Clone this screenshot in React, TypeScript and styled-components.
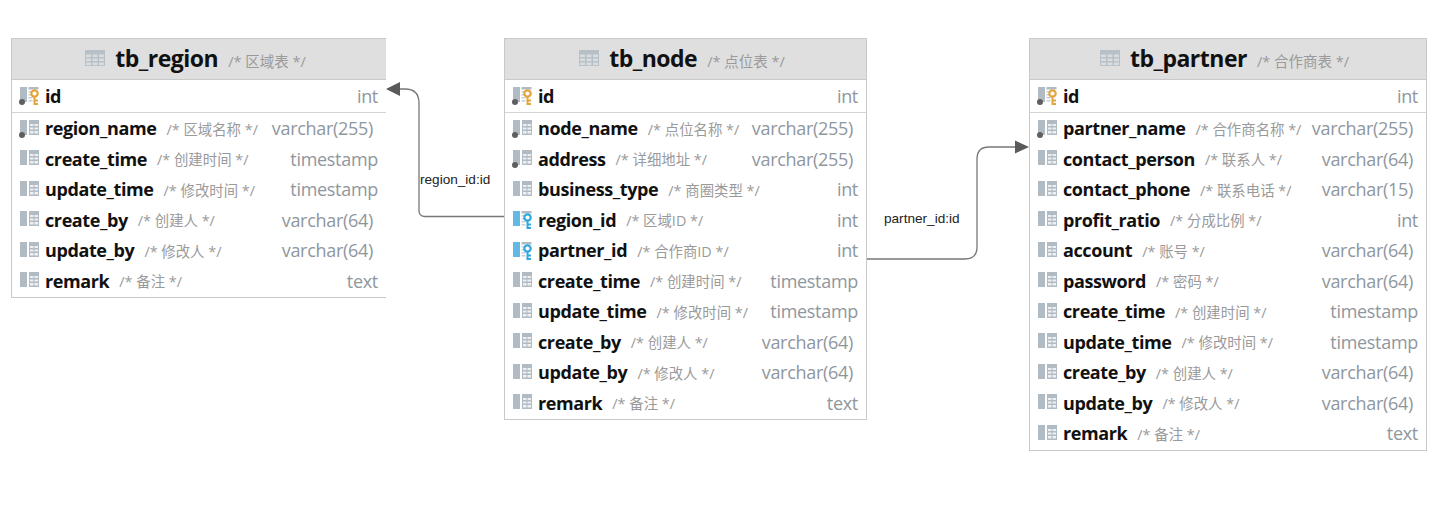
import React from 'react';
import styled, { createGlobalStyle } from 'styled-components';

const GlobalStyle = createGlobalStyle`
  html, body {
    margin: 0;
    padding: 0;
    background: #fff;
  }
`;

const FONT = `"Open Sans", "Noto Sans CJK SC", sans-serif`;

const Canvas = styled.div`
  position: relative;
  width: 1447px;
  height: 512px;
  overflow: hidden;
  background: #fff;
  font-family: ${FONT};
`;

const TableNode = styled.div<{ $x: number; $width: number; $open?: boolean }>`
  position: absolute;
  left: ${(p) => p.$x}px;
  top: 38px;
  width: ${(p) => p.$width}px;
  box-sizing: border-box;
  border: 1px solid #c9c9c9;
  border-right: ${(p) => (p.$open ? 'none' : '1px solid #c9c9c9')};
  padding-bottom: 1.5px;
  background: #fff;
`;

const Header = styled.div`
  height: 41px;
  box-sizing: border-box;
  display: flex;
  align-items: center;
  justify-content: center;
  gap: 10px;
  padding: 0 7px 2px 0;
  background: #dfdfdf;
  border-bottom: 1px solid #c9c9c9;
`;

const TableName = styled.span`
  font-size: 23px;
  font-weight: 700;
  letter-spacing: -0.5px;
  color: #111;
`;

const TableComment = styled.span`
  font-size: 14.5px;
  color: #9a9a9a;
  margin-top: 4px;
`;

const KeyRow = styled.div`
  height: 32.75px;
  box-sizing: border-box;
  display: flex;
  align-items: center;
  padding: 0 8px 0 7px;
  border-bottom: 1px solid #d4d4d4;
`;

const Row = styled.div`
  height: 30.5px;
  display: flex;
  align-items: center;
  padding: 0 8px 0 7px;
`;

const ColumnName = styled.span`
  font-size: 18px;
  font-weight: 700;
  letter-spacing: -0.4px;
  color: #111;
  margin-left: 5px;
`;

const ColumnComment = styled.span`
  font-size: 14.4px;
  color: #9a9a9a;
  margin-left: 10px;
`;

const ColumnType = styled.span<{ $sized: boolean }>`
  margin-left: auto;
  margin-right: ${(p) => (p.$sized ? 5 : 0)}px;
  font-size: 18px;
  letter-spacing: -0.3px;
  color: #8f979e;
`;

const Wires = styled.svg`
  position: absolute;
  left: 0;
  top: 0;
  pointer-events: none;
`;

const WireLabel = styled.span<{ $x: number; $y: number }>`
  position: absolute;
  left: ${(p) => p.$x}px;
  top: ${(p) => p.$y}px;
  font-family: "Liberation Sans", sans-serif;
  font-size: 13.6px;
  line-height: 14px;
  color: #222;
`;

type Kind = 'pk' | 'nn' | 'fk' | 'plain';

const TableIcon = () => (
  <svg width="20" height="16" viewBox="0 0 20 16">
    <rect width="20" height="16" fill="#b7c0c7" />
    <g fill="#d9dde0">
      {[4.5, 8.5, 12.5].map((y) =>
        [1, 7.5, 14].map((x) => <rect key={`${x}-${y}`} x={x} y={y} width="5" height="2.6" />),
      )}
    </g>
  </svg>
);

const ColumnIcon = ({ kind }: { kind: Kind }) => {
  const barColor = kind === 'fk' ? '#62b9e6' : '#b1bbc3';
  const keyColor = kind === 'pk' ? '#e4a53c' : '#2fa8dd';
  const hasKey = kind === 'pk' || kind === 'fk';
  return (
    <svg width="21" height="21" viewBox="0 0 21 21">
      <rect x="1" y="2" width="7" height="15" fill={barColor} />
      {hasKey ? (
        <g>
          <rect x="9.500" y="2" width="10" height="2.500" fill="#b1bbc3" />
          <g fill="#c8cfd5">
            <rect x="9.500" y="6" width="3" height="1.500" />
            <rect x="9.500" y="9" width="3" height="1.500" />
            <rect x="9.500" y="12" width="4" height="1.500" />
            <rect x="9.500" y="15" width="4" height="1.500" />
          </g>
          <circle cx="15.500" cy="8.500" r="3.200" fill="none" stroke={keyColor} strokeWidth="2.200" />
          <path d="M15.500 11v9M15.500 15.500h3.500M15.500 19h3.500" fill="none" stroke={keyColor} strokeWidth="2" />
        </g>
      ) : (
        <g>
          <rect x="10" y="2" width="10" height="15" fill="#b1bbc3" />
          <g fill="#eef0f2">
            <rect x="11" y="6" width="3.500" height="2" />
            <rect x="15.500" y="6" width="3.500" height="2" />
            <rect x="11" y="9.500" width="3.500" height="2" />
            <rect x="15.500" y="9.500" width="3.500" height="2" />
            <rect x="11" y="13" width="3.500" height="2.500" />
            <rect x="15.500" y="13" width="3.500" height="2.500" />
          </g>
        </g>
      )}
      {(kind === 'pk' || kind === 'nn') && <circle cx="3" cy="17" r="3" fill="#5f5f5f" />}
    </svg>
  );
};

type Column = { name: string; comment?: string; type: string; kind: Kind };

type TableData = {
  name: string;
  comment: string;
  x: number;
  width: number;
  open?: boolean;
  columns: Column[];
};

const tables: TableData[] = [
  {
    name: 'tb_region',
    comment: '/* 区域表 */',
    x: 11,
    width: 375,
    open: true,
    columns: [
      { name: 'region_name', comment: '/* 区域名称 */', type: 'varchar(255)', kind: 'nn' },
      { name: 'create_time', comment: '/* 创建时间 */', type: 'timestamp', kind: 'plain' },
      { name: 'update_time', comment: '/* 修改时间 */', type: 'timestamp', kind: 'plain' },
      { name: 'create_by', comment: '/* 创建人 */', type: 'varchar(64)', kind: 'plain' },
      { name: 'update_by', comment: '/* 修改人 */', type: 'varchar(64)', kind: 'plain' },
      { name: 'remark', comment: '/* 备注 */', type: 'text', kind: 'plain' },
    ],
  },
  {
    name: 'tb_node',
    comment: '/* 点位表 */',
    x: 504,
    width: 363,
    columns: [
      { name: 'node_name', comment: '/* 点位名称 */', type: 'varchar(255)', kind: 'nn' },
      { name: 'address', comment: '/* 详细地址 */', type: 'varchar(255)', kind: 'nn' },
      { name: 'business_type', comment: '/* 商圈类型 */', type: 'int', kind: 'plain' },
      { name: 'region_id', comment: '/* 区域ID */', type: 'int', kind: 'fk' },
      { name: 'partner_id', comment: '/* 合作商ID */', type: 'int', kind: 'fk' },
      { name: 'create_time', comment: '/* 创建时间 */', type: 'timestamp', kind: 'plain' },
      { name: 'update_time', comment: '/* 修改时间 */', type: 'timestamp', kind: 'plain' },
      { name: 'create_by', comment: '/* 创建人 */', type: 'varchar(64)', kind: 'plain' },
      { name: 'update_by', comment: '/* 修改人 */', type: 'varchar(64)', kind: 'plain' },
      { name: 'remark', comment: '/* 备注 */', type: 'text', kind: 'plain' },
    ],
  },
  {
    name: 'tb_partner',
    comment: '/* 合作商表 */',
    x: 1029,
    width: 398,
    columns: [
      { name: 'partner_name', comment: '/* 合作商名称 */', type: 'varchar(255)', kind: 'nn' },
      { name: 'contact_person', comment: '/* 联系人 */', type: 'varchar(64)', kind: 'plain' },
      { name: 'contact_phone', comment: '/* 联系电话 */', type: 'varchar(15)', kind: 'plain' },
      { name: 'profit_ratio', comment: '/* 分成比例 */', type: 'int', kind: 'plain' },
      { name: 'account', comment: '/* 账号 */', type: 'varchar(64)', kind: 'plain' },
      { name: 'password', comment: '/* 密码 */', type: 'varchar(64)', kind: 'plain' },
      { name: 'create_time', comment: '/* 创建时间 */', type: 'timestamp', kind: 'plain' },
      { name: 'update_time', comment: '/* 修改时间 */', type: 'timestamp', kind: 'plain' },
      { name: 'create_by', comment: '/* 创建人 */', type: 'varchar(64)', kind: 'plain' },
      { name: 'update_by', comment: '/* 修改人 */', type: 'varchar(64)', kind: 'plain' },
      { name: 'remark', comment: '/* 备注 */', type: 'text', kind: 'plain' },
    ],
  },
];

const App: React.FC = () => (
  <Canvas>
    <GlobalStyle />
    {tables.map((table) => (
      <TableNode key={table.name} $x={table.x} $width={table.width} $open={table.open}>
        <Header>
          <TableIcon />
          <TableName>{table.name}</TableName>
          <TableComment>{table.comment}</TableComment>
        </Header>
        <KeyRow>
          <ColumnIcon kind="pk" />
          <ColumnName>id</ColumnName>
          <ColumnType $sized={false}>int</ColumnType>
        </KeyRow>
        {table.columns.map((col) => (
          <Row key={col.name}>
            <ColumnIcon kind={col.kind} />
            <ColumnName>{col.name}</ColumnName>
            <ColumnComment>{col.comment}</ColumnComment>
            <ColumnType $sized={col.type.includes('(')}>{col.type}</ColumnType>
          </Row>
        ))}
      </TableNode>
    ))}
    <Wires width="1447" height="512" viewBox="0 0 1447 512">
      <path d="M504 216.500H425q-6 0-6-6V103q0-14-14-14H398" fill="none" stroke="#777" strokeWidth="1.300" />
      <path d="M386 89l14-7v14z" fill="#5a5a5a" />
      <path d="M867 259h98q12 0 12-12V159q0-12 12-12h27" fill="none" stroke="#777" strokeWidth="1.300" />
      <path d="M1029 147l-14-6.500v13z" fill="#5a5a5a" />
    </Wires>
    <WireLabel $x={420} $y={173}>region_id:id</WireLabel>
    <WireLabel $x={884} $y={212}>partner_id:id</WireLabel>
  </Canvas>
);

export default App;
